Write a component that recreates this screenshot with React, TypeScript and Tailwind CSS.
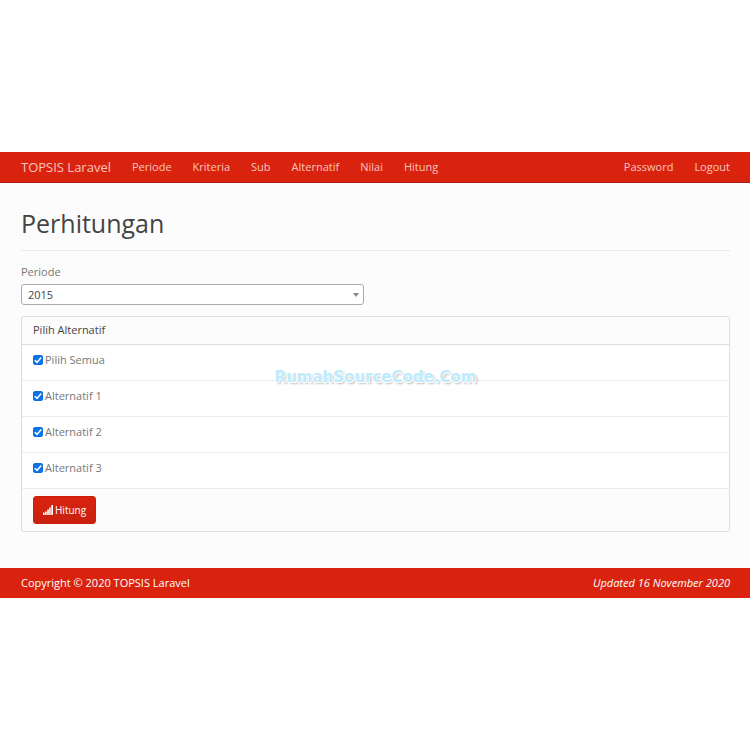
import { useState } from "react";

const menu = ["Periode", "Kriteria", "Sub", "Alternatif", "Nilai", "Hitung"];
const account = ["Password", "Logout"];
const alternatives = ["Alternatif 1", "Alternatif 2", "Alternatif 3"];

function NavLinks({ items }: { items: string[] }) {
  return (
    <ul className="flex gap-[21px]">
      {items.map((item) => (
        <li key={item}>
          <a href="#" className="text-[#fbc4bd] hover:text-white">
            {item}
          </a>
        </li>
      ))}
    </ul>
  );
}

function CheckRow({
  label,
  checked,
  onChange,
}: {
  label: string;
  checked: boolean;
  onChange: () => void;
}) {
  return (
    <li className="border-b border-[#ececef] px-[11px] pt-[7px] pb-3">
      <label className="flex items-center gap-[2px]">
        <span className="relative flex h-[10px] w-[10px]">
          <input
            type="checkbox"
            checked={checked}
            onChange={onChange}
            className="peer h-[10px] w-[10px] appearance-none rounded-[2px] border border-[#767676] bg-white checked:border-[#0b72e8] checked:bg-[#0b72e8]"
          />
          <svg
            viewBox="0 0 10 10"
            className="pointer-events-none absolute inset-0 hidden h-[10px] w-[10px] peer-checked:block"
            fill="none"
            stroke="white"
            strokeWidth="1.6"
          >
            <path d="M1.8 5.2 4 7.4 8.2 2.4" />
          </svg>
        </span>
        {label}
      </label>
    </li>
  );
}

function SignalIcon() {
  return (
    <svg viewBox="0 0 10 10" className="h-[10px] w-[10px]" fill="currentColor">
      <rect x="0" y="7.5" width="1.6" height="2.5" />
      <rect x="2.1" y="6.5" width="1.6" height="3.5" />
      <rect x="4.2" y="4.5" width="1.6" height="5.5" />
      <rect x="6.2" y="2.5" width="1.5" height="7.5" />
      <rect x="8.3" y="0" width="1.7" height="10" />
    </svg>
  );
}

export default function App() {
  const [selected, setSelected] = useState<string[]>(alternatives);
  const all = selected.length === alternatives.length;

  const toggle = (name: string) =>
    setSelected((prev) =>
      prev.includes(name) ? prev.filter((n) => n !== name) : [...prev, name]
    );

  return (
    <div className="min-h-screen bg-white py-[152px] font-['Open_Sans',sans-serif] text-[11px] leading-4 text-[#777777]">
      <div className="bg-[#fcfcfc]">
        <nav className="flex h-[31px] items-center justify-between border-b border-[#a91b0c] bg-[#d9230f] pr-5 pl-[21px]">
          <div className="flex items-center gap-[21px]">
            <a href="#" className="text-[13px] text-[#fbc4bd] hover:text-white">
              TOPSIS Laravel
            </a>
            <NavLinks items={menu} />
          </div>
          <NavLinks items={account} />
        </nav>

        <main className="pt-6 pr-5 pb-9 pl-[21px]">
          <h1 className="border-b border-[#e9e9e9] pb-[11px] text-[25px] leading-8 text-[#444444]">
            Perhitungan
          </h1>

          <form onSubmit={(e) => e.preventDefault()}>
            <div className="mt-[13px] w-[343px] max-w-full">
              <label htmlFor="periode" className="block">
                Periode
              </label>
              <div className="relative mt-1">
                <select
                  id="periode"
                  className="block h-[21px] w-full appearance-none rounded-[3px] border border-[#aaaaaa] bg-white px-[6px] text-[#444444]"
                >
                  <option>2015</option>
                </select>
                <svg
                  viewBox="0 0 6 4"
                  className="pointer-events-none absolute top-[9px] right-[5px] h-1 w-[6px]"
                  fill="#888888"
                >
                  <path d="M0 0h6L3 4z" />
                </svg>
              </div>
            </div>

            <section className="relative mt-[11px] rounded-[3px] border border-[#dddddf]">
              <h2 className="border-b border-[#dddddf] px-[11px] pt-[5px] pb-[6px] text-[11px] text-[#444444]">
                Pilih Alternatif
              </h2>
              <ul className="bg-white">
                <CheckRow
                  label="Pilih Semua"
                  checked={all}
                  onChange={() => setSelected(all ? [] : alternatives)}
                />
                {alternatives.map((name) => (
                  <CheckRow
                    key={name}
                    label={name}
                    checked={selected.includes(name)}
                    onChange={() => toggle(name)}
                  />
                ))}
              </ul>
              <div className="px-[11px] py-[7px]">
                <button
                  type="submit"
                  className="flex h-7 items-center gap-[2px] rounded-[3px] border border-[#c9200e] bg-gradient-to-b from-[#d9230f] to-[#c9200e] px-[9px] text-[10px] text-white"
                >
                  <SignalIcon />
                  Hitung
                </button>
              </div>
              <p className="pointer-events-none absolute inset-x-0 top-[50px] text-center font-['DejaVu_Sans',sans-serif] text-[15px] leading-5 font-bold text-[#bdeafc] [text-shadow:1px_1px_0_#fff,-1px_0_#fff,0_1px_#fff,0_-1px_#fff,2px_2px_2px_#bbb]">
                RumahSourceCode.Com
              </p>
            </section>
          </form>
        </main>

        <footer className="flex h-[30px] items-center justify-between bg-[#d9230f] pr-5 pl-[21px] text-white">
          <p>Copyright &copy; 2020 TOPSIS Laravel</p>
          <em>Updated 16 November 2020</em>
        </footer>
      </div>
    </div>
  );
}
